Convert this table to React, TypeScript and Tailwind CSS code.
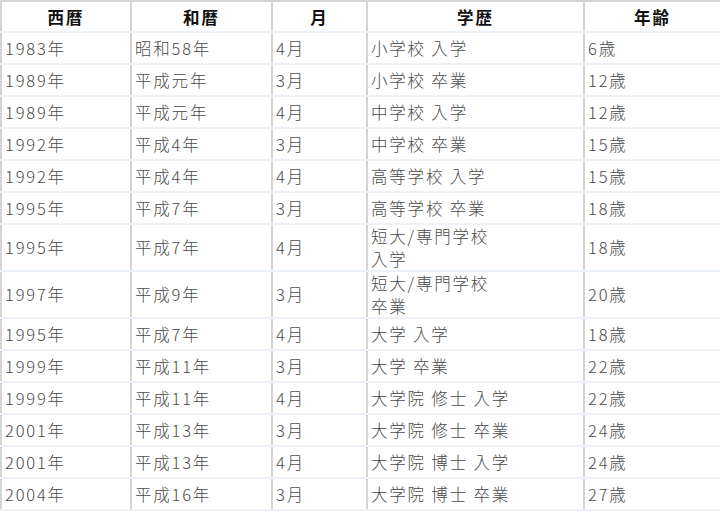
const rows: [string, string, string, string[], string][] = [
  ["1983年", "昭和58年", "4月", ["小学校 入学"], "6歳"],
  ["1989年", "平成元年", "3月", ["小学校 卒業"], "12歳"],
  ["1989年", "平成元年", "4月", ["中学校 入学"], "12歳"],
  ["1992年", "平成4年", "3月", ["中学校 卒業"], "15歳"],
  ["1992年", "平成4年", "4月", ["高等学校 入学"], "15歳"],
  ["1995年", "平成7年", "3月", ["高等学校 卒業"], "18歳"],
  ["1995年", "平成7年", "4月", ["短大/専門学校", "入学"], "18歳"],
  ["1997年", "平成9年", "3月", ["短大/専門学校", "卒業"], "20歳"],
  ["1995年", "平成7年", "4月", ["大学 入学"], "18歳"],
  ["1999年", "平成11年", "3月", ["大学 卒業"], "22歳"],
  ["1999年", "平成11年", "4月", ["大学院 修士 入学"], "22歳"],
  ["2001年", "平成13年", "3月", ["大学院 修士 卒業"], "24歳"],
  ["2001年", "平成13年", "4月", ["大学院 博士 入学"], "24歳"],
  ["2004年", "平成16年", "3月", ["大学院 博士 卒業"], "27歳"],
];

const headers = ["西暦", "和暦", "月", "学歴", "年齢"];

const cell =
  "h-[32px] p-0 pl-[3px] border-x-2 border-x-[#d4d4d4] border-b-2 border-b-[#edf2f8] align-middle";

export default function App() {
  return (
    <div className="w-[720px] h-[515px] bg-white font-['Noto_Sans_CJK_JP','Noto_Sans',sans-serif] overflow-hidden">
      <table className="w-[720px] table-fixed border-collapse border-t-2 border-x-2 border-[#d4d4d4]">
        <colgroup>
          <col className="w-[130px]" />
          <col className="w-[141px]" />
          <col className="w-[95px]" />
          <col className="w-[217px]" />
          <col className="w-[137px]" />
        </colgroup>
        <thead>
          <tr>
            {headers.map((h) => (
              <th
                key={h}
                className="h-[31px] p-0 border-x-2 border-x-[#d4d4d4] border-b-2 border-b-[#edf2f8] text-center text-[16.5px] leading-[22px] tracking-[2px] font-bold text-[#111]"
              >
                {h}
              </th>
            ))}
          </tr>
        </thead>
        <tbody>
          {rows.map((r, i) => (
            <tr key={i} className="text-[16.5px] leading-[22.5px] tracking-[1.8px] font-light text-[#4a4a4a]">
              {[r[0], r[1], r[2]].map((c, j) => (
                <td key={j} className={cell}>
                  {c}
                </td>
              ))}
              <td className={cell}>
                {r[3].map((l, k) => (
                  <div key={k}>{l}</div>
                ))}
              </td>
              <td className={cell}>{r[4]}</td>
            </tr>
          ))}
        </tbody>
      </table>
    </div>
  );
}
